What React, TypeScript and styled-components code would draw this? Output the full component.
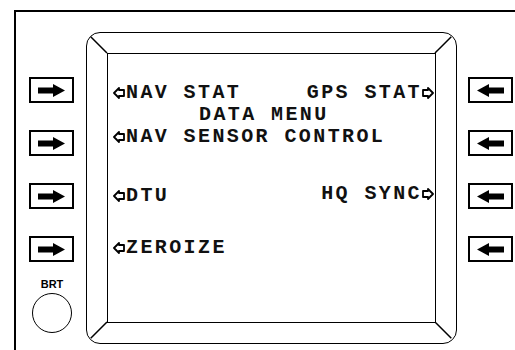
import styled, { createGlobalStyle } from "styled-components";

const GlobalStyle = createGlobalStyle`
  html, body {
    margin: 0;
    padding: 0;
    background: #fff;
    overflow: hidden;
  }
`;

const Frame = styled.div`
  margin: 10px 0 0 14px;
  width: 501px;
  height: 340px;
  box-sizing: border-box;
  border-top: 2px solid #000;
  border-left: 2px solid #000;
  display: flex;
  align-items: flex-start;
`;

const SideColumn = styled.div<{ $side: "left" | "right" }>`
  width: ${(p) => (p.$side === "left" ? "70px" : "45px")};
  margin-left: ${(p) => (p.$side === "right" ? "11px" : "0")};
  padding-top: 65px;
  display: flex;
  flex-direction: column;
  align-items: center;
  gap: 27px;
`;

const KeyButton = styled.div`
  width: 45px;
  height: 26px;
  box-sizing: border-box;
  border: 2px solid #000;
  background: #fff;
  display: flex;
  align-items: center;
  justify-content: center;
`;

const BrightBlock = styled.div`
  margin-top: -11px;
  display: flex;
  flex-direction: column;
  align-items: center;
  gap: 3px;
`;

const BrightLabel = styled.div`
  font-family: "Liberation Sans", Arial, sans-serif;
  font-weight: bold;
  font-size: 11px;
  line-height: 12px;
  color: #000;
  margin-left: 2px;
`;

const Knob = styled.div`
  width: 40px;
  height: 40px;
  box-sizing: border-box;
  border: 1.5px solid #000;
  border-radius: 50%;
  margin-left: 2px;
`;

const Bezel = styled.div`
  position: relative;
  margin-top: 20px;
  width: 371px;
  height: 312px;
  box-sizing: border-box;
  border: 1.5px solid #000;
  border-radius: 14px;
  padding: 20px;
  display: flex;
`;

const Chamfers = styled.svg`
  position: absolute;
  inset: 0;
  width: 100%;
  height: 100%;
  pointer-events: none;
`;

const Screen = styled.div`
  position: relative;
  flex: 1;
  border: 1.5px solid #000;
  background: #fff;
  padding: 28px 1px 0 5px;
  display: flex;
  flex-direction: column;
`;

const Line = styled.div<{ $top?: number; $indent?: number }>`
  height: 22px;
  margin-top: ${(p) => p.$top ?? 0}px;
  padding-left: ${(p) => p.$indent ?? 0}px;
  display: flex;
  align-items: center;
  justify-content: space-between;
`;

const Option = styled.div<{ $lift?: number }>`
  display: flex;
  align-items: center;
  gap: 1px;
  margin-top: ${(p) => -(p.$lift ?? 0) * 2}px;
`;

const Label = styled.span`
  font-family: "Liberation Mono", "Courier New", monospace;
  font-weight: bold;
  font-size: 20px;
  line-height: 22px;
  letter-spacing: 2.4px;
  color: #111;
  white-space: pre;
`;

const TrailingLabel = styled(Label)`
  margin-right: -1px;
`;

const SoftArrow = ({ dir }: { dir: "left" | "right" }) => (
  <svg width="12" height="12" viewBox="0 0 12 12">
    <polygon
      points={
        dir === "left"
          ? "1,6 6,1 6,3 11,3 11,9 6,9 6,11"
          : "11,6 6,1 6,3 1,3 1,9 6,9 6,11"
      }
      fill="#fff"
      stroke="#000"
      strokeWidth="1.8"
      strokeLinejoin="round"
    />
  </svg>
);

const KeyArrow = ({ dir }: { dir: "left" | "right" }) => (
  <svg width="27" height="13" viewBox="0 0 27 13">
    <polygon
      points={
        dir === "right"
          ? "0,3.5 15,3.5 15,0 27,6.5 15,13 15,9.5 0,9.5"
          : "27,3.5 12,3.5 12,0 0,6.5 12,13 12,9.5 27,9.5"
      }
      fill="#000"
    />
  </svg>
);

const rows = [0, 1, 2, 3];

export default function App() {
  return (
    <>
      <GlobalStyle />
      <Frame>
        <SideColumn $side="left">
          {rows.map((r) => (
            <KeyButton key={`l-${r}`}>
              <KeyArrow dir="right" />
            </KeyButton>
          ))}
          <BrightBlock>
            <BrightLabel>BRT</BrightLabel>
            <Knob />
          </BrightBlock>
        </SideColumn>

        <Bezel>
          <Chamfers>
            <line x1="3.7" y1="3.7" x2="20" y2="20" stroke="#000" strokeWidth="1.5" />
            <line x1="364.3" y1="3.7" x2="348" y2="20" stroke="#000" strokeWidth="1.5" />
            <line x1="3.7" y1="305.3" x2="20" y2="289" stroke="#000" strokeWidth="1.5" />
            <line x1="364.3" y1="305.3" x2="348" y2="289" stroke="#000" strokeWidth="1.5" />
          </Chamfers>
          <Screen>
            <Line>
              <Option>
                <SoftArrow dir="left" />
                <Label>NAV STAT</Label>
              </Option>
              <Option>
                <TrailingLabel>GPS STAT</TrailingLabel>
                <SoftArrow dir="right" />
              </Option>
            </Line>
            <Line $indent={86}>
              <Label>DATA MENU</Label>
            </Line>
            <Line>
              <Option>
                <SoftArrow dir="left" />
                <Label>NAV SENSOR CONTROL</Label>
              </Option>
            </Line>
            <Line $top={37}>
              <Option>
                <SoftArrow dir="left" />
                <Label>DTU</Label>
              </Option>
              <Option $lift={2}>
                <TrailingLabel>HQ SYNC</TrailingLabel>
                <SoftArrow dir="right" />
              </Option>
            </Line>
            <Line $top={30}>
              <Option>
                <SoftArrow dir="left" />
                <Label>ZEROIZE</Label>
              </Option>
            </Line>
          </Screen>
        </Bezel>

        <SideColumn $side="right">
          {rows.map((r) => (
            <KeyButton key={`r-${r}`}>
              <KeyArrow dir="left" />
            </KeyButton>
          ))}
        </SideColumn>
      </Frame>
    </>
  );
}
